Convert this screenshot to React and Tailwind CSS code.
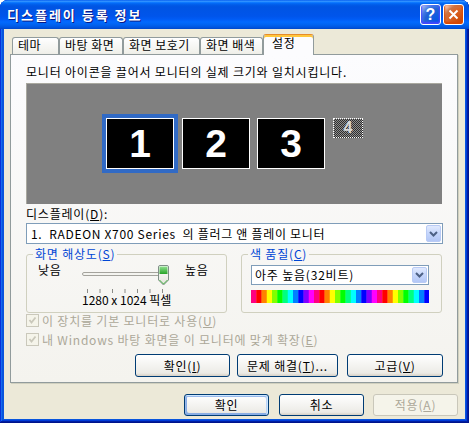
import React from "react";

const FONT = "font-['Noto_Sans_CJK_KR','Noto_Sans',sans-serif]";

function ArrowBtn({ size = "h-[17px]" }) {
  return (
    <div
      className={
        "w-[15px] " +
        size +
        " rounded-[2px] border border-[#B9CBF5] bg-[linear-gradient(180deg,#E1EAFE,#C5D6FC_50%,#B3C7F6)] flex items-center justify-center"
      }
    >
      <svg width="9" height="6" viewBox="0 0 9 6">
        <path d="M1 1 L4.5 4.5 L8 1" fill="none" stroke="#4D6185" strokeWidth="2" />
      </svg>
    </div>
  );
}

function Checkbox() {
  return (
    <div className="w-[13px] h-[13px] shrink-0 border border-[#CAC8BB] bg-[#F5F4EA] flex items-center justify-center">
      <svg width="9" height="9" viewBox="0 0 9 9">
        <path d="M1.5 4 L3.5 6.5 L7.5 1.5" fill="none" stroke="#CAC8BB" strokeWidth="1.8" />
      </svg>
    </div>
  );
}

function Slider() {
  const ticks = [5.5, 18, 30.5, 43, 55.5, 68, 80.5];
  return (
    <svg width="90" height="29" viewBox="0 0 90 29">
      <defs>
        <linearGradient id="thumbG" x1="0" y1="0" x2="0" y2="1">
          <stop offset="0" stopColor="#8FE08F" />
          <stop offset="1" stopColor="#27A327" />
        </linearGradient>
        <linearGradient id="thumbW" x1="0" y1="0" x2="0" y2="1">
          <stop offset="0" stopColor="#FFFFFF" />
          <stop offset="1" stopColor="#E4E3DC" />
        </linearGradient>
      </defs>
      <rect x="0.5" y="8.5" width="84" height="3" rx="1.5" fill="#F4F4F0" stroke="#A4A39D" />
      <path
        d="M76.5 3 Q76.5 1.5 78 1.5 H85 Q86.5 1.5 86.5 3 V16 L81.5 21 L76.5 16 Z"
        fill="url(#thumbW)"
        stroke="#7F8F86"
      />
      <path d="M77.5 3 Q77.5 2.5 78 2.5 H85 Q85.5 2.5 85.5 3 V10 H77.5 Z" fill="url(#thumbG)" />
      <path d="M77.5 16 L81.5 20 L85.5 16" fill="none" stroke="#48B448" strokeWidth="1" />
      {ticks.map((x) => (
        <line key={x} x1={x} y1="25" x2={x} y2="29" stroke="#8C8C88" strokeWidth="1" />
      ))}
    </svg>
  );
}

function ColorBar() {
  const stripes = Array.from({ length: 34 }, (_, i) => ({
    x: i * 5.25,
    hue: (330 + i * 30) % 360,
  }));
  return (
    <svg width="178" height="13" viewBox="0 0 178 13">
      {stripes.map((s, i) => (
        <rect key={i} x={s.x} y="0" width="5.6" height="13" fill={`hsl(${s.hue},100%,50%)`} />
      ))}
    </svg>
  );
}

function Monitor({ n }) {
  return (
    <div className="w-[68px] h-[51px] border border-white bg-black flex items-center justify-center">
      <span className="font-['Liberation_Sans',sans-serif] font-bold text-[39px] leading-none tracking-normal text-white">
        {n}
      </span>
    </div>
  );
}

export default function App() {
  return (
    <div
      className={
        FONT +
        " w-[469px] h-[423px] flex flex-col rounded-t-[8px] bg-[#0855DD] shadow-[inset_-1px_-1px_#00138C,inset_1px_1px_#0831D9,inset_-2px_-2px_#001EA0,inset_2px_2px_#166AEE,inset_-3px_-3px_#003BDA,inset_3px_3px_#0855DD] text-[12px] tracking-[0.8px] text-black"
      }
    >
      {/* Title bar */}
      <div className="h-[29px] shrink-0 flex items-center pl-[7px] pr-[5px] rounded-t-[8px] bg-[linear-gradient(180deg,#0058EE_0%,#3593FF_4%,#288EFF_6%,#127DFF_8%,#036FFC_10%,#0262EE_14%,#0057E5_20%,#0054E3_24%,#0055EB_56%,#005BF5_66%,#026AFE_76%,#0062EF_86%,#0055E0_94%,#0048C8_100%)]">
        <span className="text-white font-bold text-[13px] tracking-[2px] leading-[16px] [text-shadow:1px_1px_#0A1883]">
          디스플레이 등록 정보
        </span>
        <div className="ml-auto flex gap-[2px]">
          <div className="w-[21px] h-[21px] rounded-[3px] border border-white bg-[radial-gradient(circle_at_90%_90%,#0054E9_0,#2263D5_55%,#4479E4_70%,#A3BBEC_90%,#FFFFFF_100%)] shadow-[inset_0_-1px_2px_1px_#4646FF] flex items-center justify-center">
            <span className="font-['Liberation_Sans',sans-serif] font-bold text-[16px] leading-none tracking-normal text-white">
              ?
            </span>
          </div>
          <div className="w-[21px] h-[21px] rounded-[3px] border border-white bg-[radial-gradient(circle_at_90%_90%,#CC4600_0,#DC6527_55%,#CD7546_70%,#FFCCB2_90%,#FFFFFF_100%)] shadow-[inset_0_-1px_2px_1px_#DA4600] flex items-center justify-center">
            <svg width="11" height="11" viewBox="0 0 11 11">
              <path d="M1.5 1.5 L9.5 9.5 M9.5 1.5 L1.5 9.5" stroke="white" strokeWidth="2" />
            </svg>
          </div>
        </div>
      </div>

      {/* Body */}
      <div className="flex-1 mx-[4px] mb-[4px] bg-[#ECE9D8] flex flex-col">
        {/* Tabs */}
        <div className="pt-[5px] pl-[8px] h-[25px] flex items-end">
          <div className="w-[47px] h-[17px] border border-b-0 border-[#919B9C] rounded-t-[3px] bg-[linear-gradient(180deg,#FFFFFF,#FAFAF9_26%,#F0F0EA_95%,#ECEBE5)] pl-[5px] leading-[14px] whitespace-nowrap tracking-[0.5px]">
            테마
          </div>
          <div className="w-[64px] h-[17px] border border-b-0 border-[#919B9C] rounded-t-[3px] bg-[linear-gradient(180deg,#FFFFFF,#FAFAF9_26%,#F0F0EA_95%,#ECEBE5)] pl-[5px] leading-[14px] whitespace-nowrap tracking-[0.5px]">
            바탕 화면
          </div>
          <div className="w-[77px] h-[17px] border border-b-0 border-[#919B9C] rounded-t-[3px] bg-[linear-gradient(180deg,#FFFFFF,#FAFAF9_26%,#F0F0EA_95%,#ECEBE5)] pl-[5px] leading-[14px] whitespace-nowrap tracking-[0.5px]">
            화면 보호기
          </div>
          <div className="w-[63px] h-[17px] border border-b-0 border-[#919B9C] rounded-t-[3px] bg-[linear-gradient(180deg,#FFFFFF,#FAFAF9_26%,#F0F0EA_95%,#ECEBE5)] pl-[5px] leading-[14px] whitespace-nowrap tracking-[0.5px]">
            화면 배색
          </div>
          <div className="relative z-10 -mb-[1px] w-[51px] h-[21px] border border-b-0 border-[#919B9C] border-t-[#E68B2C] rounded-t-[3px] bg-[#FCFCFE] shadow-[inset_0_2px_#FFC73C] pl-[8px] pt-[1px] leading-[14px] whitespace-nowrap">
            설정
          </div>
        </div>

        {/* Panel */}
        <div className="ml-[6px] w-[448px] h-[329px] border border-[#919B9C] bg-[linear-gradient(180deg,#FCFCFE,#F4F3EE)] shadow-[1px_1px_#D0D0BF] pl-[15px] pr-[14px] pt-[10px]">
          <div className="leading-[14px] whitespace-nowrap">모니터 아이콘을 끌어서 모니터의 실제 크기와 일치시킵니다.</div>

          {/* Monitor canvas */}
          <div className="relative mt-[4px] w-[416px] h-[121px] bg-[#808080] border-t border-l border-[#A9A89F]">
            <div className="absolute left-[75px] top-[30px] w-[76px] h-[59px] border-[4px] border-[#316AC5]">
              <Monitor n="1" />
            </div>
            <div className="absolute left-[155px] top-[34px]">
              <Monitor n="2" />
            </div>
            <div className="absolute left-[230px] top-[34px]">
              <Monitor n="3" />
            </div>
            <div className="absolute left-[306px] top-[34px] w-[30px] h-[20px] border border-dotted border-white bg-[image:repeating-conic-gradient(#2E2E2E_0_25%,#8E8E8E_0_50%)] bg-[length:2px_2px] flex items-center justify-center">
              <span className="font-['Liberation_Sans',sans-serif] font-bold text-[16px] leading-none tracking-normal text-[#D8D8D8]">
                4
              </span>
            </div>
          </div>

          <div className="mt-[3px] leading-[14px]">
            디스플레이(<u>D</u>):
          </div>
          <div className="mt-[2px] h-[21px] border border-[#7F9DB9] bg-white flex items-center pl-[4px] pr-[1px]">
            <span className="flex-1 leading-[14px] whitespace-pre tracking-[0.7px]">1.  RADEON X700 Series  의 플러그 앤 플레이 모니터</span>
            <ArrowBtn size="h-[17px]" />
          </div>

          {/* Group boxes */}
          <div className="mt-[3px] flex gap-[14px]">
            <fieldset className="w-[201px] h-[66px] border border-[#D0D0BF] rounded-[3px]">
              <legend className="ml-[6px] px-[2px] leading-[14px] text-[#0046D5] whitespace-nowrap">
                화면 해상도(<u>S</u>)
              </legend>
              <div className="flex items-start pt-[2px]">
                <span className="ml-[11px] w-[44px] leading-[14px] whitespace-nowrap">낮음</span>
                <div className="flex flex-col pt-[1px]">
                  <Slider />
                  <span className="leading-[14px] whitespace-pre tracking-normal">1280 x 1024 픽셀</span>
                </div>
                <span className="ml-[13px] leading-[14px] whitespace-nowrap">높음</span>
              </div>
            </fieldset>
            <fieldset className="w-[201px] h-[66px] border border-[#D0D0BF] rounded-[3px]">
              <legend className="ml-[6px] px-[2px] leading-[14px] text-[#0046D5] whitespace-nowrap">
                색 품질(<u>C</u>)
              </legend>
              <div className="pl-[9px] pt-[4px]">
                <div className="w-[178px] h-[20px] border border-[#7F9DB9] bg-white flex items-center pl-[3px] pr-[1px]">
                  <span className="flex-1 leading-[14px] whitespace-nowrap">아주 높음(32비트)</span>
                  <ArrowBtn size="h-[16px]" />
                </div>
                <div className="mt-[5px] h-[13px]">
                  <ColorBar />
                </div>
              </div>
            </fieldset>
          </div>

          {/* Checkboxes */}
          <div className="mt-[1px] h-[13px] flex items-center gap-[3px] text-[#ACA899]">
            <Checkbox />
            <span className="leading-[14px] whitespace-nowrap">
              이 장치를 기본 모니터로 사용(<u>U</u>)
            </span>
          </div>
          <div className="mt-[6px] h-[13px] flex items-center gap-[3px] text-[#ACA899]">
            <Checkbox />
            <span className="leading-[14px] whitespace-nowrap">
              내 Windows 바탕 화면을 이 모니터에 맞게 확장(<u>E</u>)
            </span>
          </div>

          {/* Panel buttons */}
          <div className="mt-[8px] flex justify-end">
            <div className="w-[95px] h-[23px] border border-[#003C74] rounded-[3px] bg-[linear-gradient(180deg,#FFFFFF,#ECEBE6_86%,#D6D0C5)] flex items-center justify-center leading-[14px] whitespace-nowrap">
              확인(<u>I</u>)
            </div>
            <div className="ml-[7px] w-[101px] h-[23px] border border-[#003C74] rounded-[3px] bg-[linear-gradient(180deg,#FFFFFF,#ECEBE6_86%,#D6D0C5)] flex items-center justify-center leading-[14px] whitespace-nowrap">
              문제 해결(<u>T</u>)...
            </div>
            <div className="ml-[9px] w-[96px] h-[23px] border border-[#003C74] rounded-[3px] bg-[linear-gradient(180deg,#FFFFFF,#ECEBE6_86%,#D6D0C5)] flex items-center justify-center leading-[14px] whitespace-nowrap">
              고급(<u>V</u>)
            </div>
          </div>
        </div>

        {/* Dialog buttons */}
        <div className="mt-[11px] pr-[7px] flex justify-end">
          <div className="w-[85px] h-[22px] border border-[#003C74] rounded-[3px] bg-[linear-gradient(180deg,#FFFFFF,#ECEBE6_86%,#D6D0C5)] shadow-[inset_-1px_1px_#CEE7FF,inset_1px_2px_#98B8EA,inset_-2px_2px_#BCD4F6,inset_1px_-1px_#89ADE4,inset_2px_-2px_#89ADE4] flex items-center justify-center leading-[14px]">
            확인
          </div>
          <div className="ml-[10px] w-[85px] h-[22px] border border-[#003C74] rounded-[3px] bg-[linear-gradient(180deg,#FFFFFF,#ECEBE6_86%,#D6D0C5)] flex items-center justify-center leading-[14px]">
            취소
          </div>
          <div className="ml-[9px] w-[85px] h-[22px] border border-[#C9C7BA] rounded-[3px] bg-[#F5F4EA] text-[#ACA899] flex items-center justify-center leading-[14px]">
            적용(<u>A</u>)
          </div>
        </div>
      </div>
    </div>
  );
}
